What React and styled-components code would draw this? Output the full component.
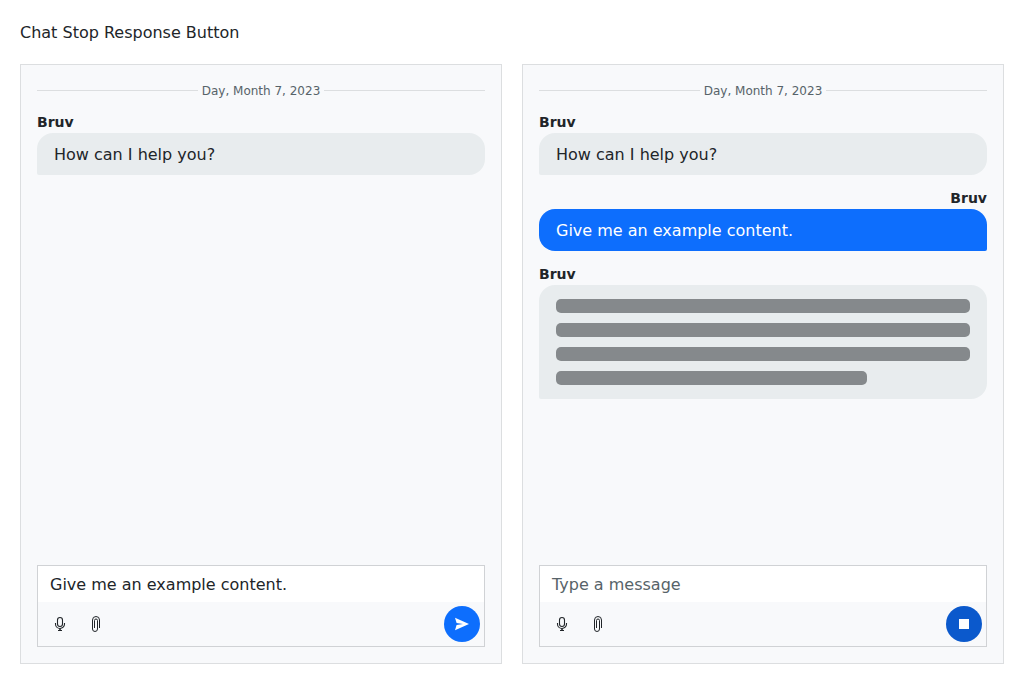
import React, { useId, useState } from "react";
import styled, { createGlobalStyle, css } from "styled-components";

const GlobalStyle = createGlobalStyle`
  *, *::before, *::after { box-sizing: border-box; }
  body {
    margin: 0;
    background: #ffffff;
    color: #212529;
    font: 16px/25px "DejaVu Sans", sans-serif;
  }
  button, textarea { font: inherit; color: inherit; }
`;

const Page = styled.main`
  display: flex;
  flex-direction: column;
  gap: 19px;
  min-height: 100vh;
  padding: 20px;
`;

const Title = styled.h1`
  margin: 0;
  font-size: 16px;
  line-height: 25px;
  font-weight: 400;
`;

const Columns = styled.div`
  flex: 1;
  display: grid;
  grid-template-columns: repeat(2, minmax(0, 1fr));
  gap: 20px;
`;

const ChatPanel = styled.section`
  display: flex;
  flex-direction: column;
  gap: 16px;
  padding: 16px;
  border: 1px solid #dcdee0;
  background: #f8f9fb;
`;

const MessageList = styled.div`
  flex: 1;
  display: flex;
  flex-direction: column;
  gap: 14px;
`;

const DateSeparator = styled.div`
  display: flex;
  align-items: center;
  gap: 4px;
  color: #576369;
  font-size: 12px;
  line-height: 16px;

  &::before, &::after {
    content: "";
    flex: 1;
    height: 1px;
    background: #dcdee0;
  }
`;

const DateLabel = styled.time`
  padding-top: 2px;
`;

const MessageGroup = styled.article`
  display: flex;
  flex-direction: column;
  gap: 2px;
  text-align: ${(p) => (p.$own ? "right" : "left")};
`;

const Author = styled.div`
  font-size: 14px;
  line-height: 18px;
  font-weight: 700;
`;

const Bubble = styled.div`
  padding: 9px 17px 8px;
  text-align: left;
  ${(p) =>
    p.$own
      ? css`
          border-radius: 16px 16px 2px 16px;
          background: #0d6efd;
          color: #ffffff;
        `
      : css`
          border-radius: 16px 16px 16px 2px;
          background: #e8ecee;
        `}
`;

const Skeleton = styled.div`
  display: flex;
  flex-direction: column;
  gap: 10px;
  padding: 5px 0 6px;
`;

const SkeletonLine = styled.div`
  width: ${(p) => (p.$short ? "75%" : "100%")};
  height: 14px;
  border-radius: 5px;
  background: #85898c;
`;

const Composer = styled.form`
  border: 1px solid #d0d2d5;
`;

const MessageInput = styled.textarea`
  display: block;
  width: 100%;
  height: 36px;
  padding: 6px 12px 5px;
  border: 0;
  outline: 0;
  resize: none;
  overflow: hidden;
  background: #ffffff;

  &::placeholder { color: #576369; opacity: 1; }
`;

const Toolbar = styled.div`
  display: flex;
  align-items: center;
  padding: 4px;
`;

const IconButton = styled.button`
  display: flex;
  align-items: center;
  justify-content: center;
  width: 36px;
  height: 36px;
  padding: 0;
  border: 0;
  background: transparent;
  cursor: pointer;
`;

const ActionButton = styled(IconButton)`
  margin-left: auto;
  border-radius: 50%;
  background: ${(p) => (p.$active ? "#0b59cc" : "#0d6efd")};
  color: #ffffff;
`;

const Icon = styled.svg.attrs({
  viewBox: "0 0 16 16",
  width: 16,
  height: 16,
  "aria-hidden": true,
})`
  display: block;
`;

const MicIcon = () => (
  <Icon fill="none" stroke="currentColor">
    <rect x="5.5" y="1.5" width="5" height="9" rx="2.5" strokeWidth="1.1" />
    <path d="M3.5 7v1a4.5 4.5 0 0 0 9 0V7" strokeWidth="1.1" />
    <path d="M8 12.5v2" strokeWidth="1.6" />
    <path d="M6 14.5h4" />
  </Icon>
);

const AttachIcon = () => (
  <Icon fill="none" stroke="currentColor">
    <path d="M11.5 12V4a3.5 3.5 0 0 0-7 0v9a2.5 2.5 0 0 0 5 0V4.5a1.5 1.5 0 0 0-3 0V12" />
  </Icon>
);

const SendIcon = () => (
  <Icon fill="currentColor">
    <path d="M1 1.7 15 8 1 14.3 2.6 9 9 8 2.6 7z" />
  </Icon>
);

const StopIcon = () => (
  <Icon fill="currentColor">
    <path d="M3 3h10v10H3z" />
  </Icon>
);

function Message({ own, children }) {
  return (
    <MessageGroup $own={own}>
      <Author>Bruv</Author>
      <Bubble $own={own}>{children}</Bubble>
    </MessageGroup>
  );
}

function Chat({ draft = "", responding = false, children }) {
  const [text, setText] = useState(draft);
  const inputId = useId();
  return (
    <ChatPanel>
      <MessageList>
        <DateSeparator>
          <DateLabel>Day, Month 7, 2023</DateLabel>
        </DateSeparator>
        {children}
      </MessageList>
      <Composer onSubmit={(e) => e.preventDefault()}>
        <MessageInput
          id={inputId}
          rows={1}
          aria-label="Message"
          placeholder="Type a message"
          value={text}
          onChange={(e) => setText(e.target.value)}
        />
        <Toolbar>
          <IconButton type="button" aria-label="Speech to text">
            <MicIcon />
          </IconButton>
          <IconButton type="button" aria-label="Attach file">
            <AttachIcon />
          </IconButton>
          <ActionButton
            type={responding ? "button" : "submit"}
            $active={responding}
            aria-label={responding ? "Stop response" : "Send message"}
          >
            {responding ? <StopIcon /> : <SendIcon />}
          </ActionButton>
        </Toolbar>
      </Composer>
    </ChatPanel>
  );
}

export default function App() {
  return (
    <>
      <GlobalStyle />
      <Page>
        <Title>Chat Stop Response Button</Title>
        <Columns>
          <Chat draft="Give me an example content.">
            <Message>How can I help you?</Message>
          </Chat>
          <Chat responding>
            <Message>How can I help you?</Message>
            <Message own>Give me an example content.</Message>
            <Message>
              <Skeleton>
                <SkeletonLine />
                <SkeletonLine />
                <SkeletonLine />
                <SkeletonLine $short />
              </Skeleton>
            </Message>
          </Chat>
        </Columns>
      </Page>
    </>
  );
}
